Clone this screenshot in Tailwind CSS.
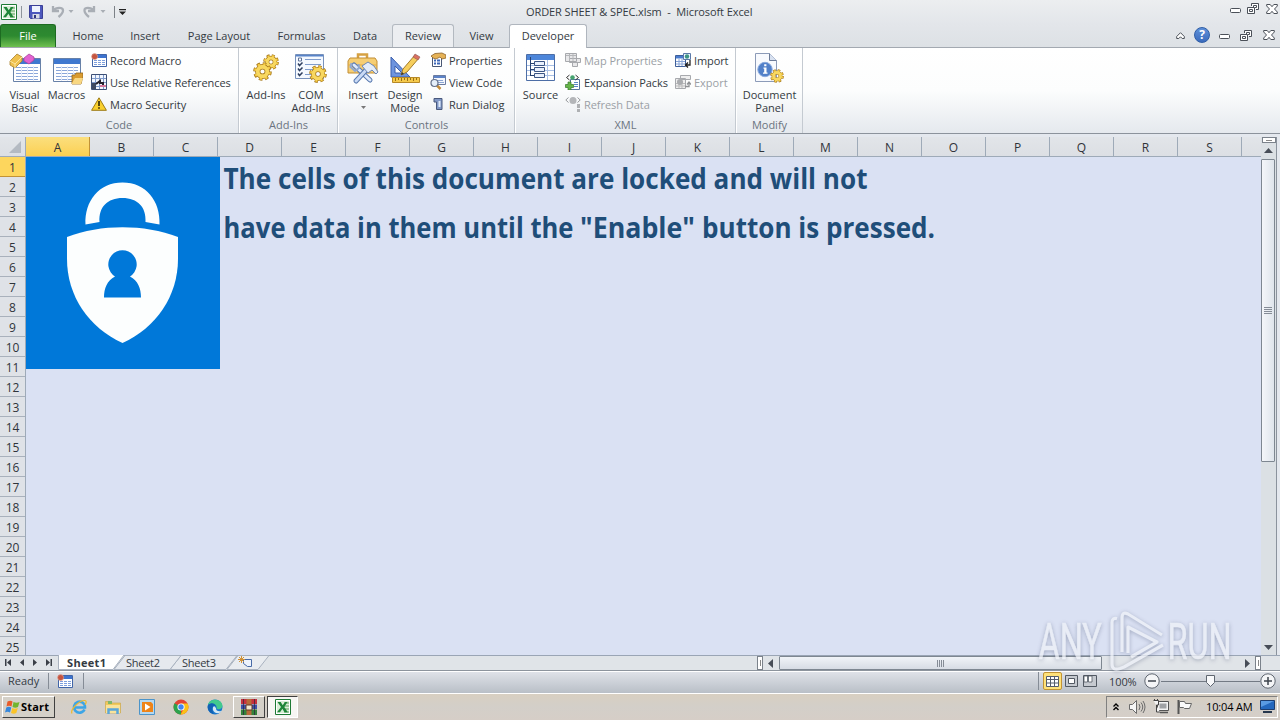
<!DOCTYPE html>
<html lang="en">
  <head>
    <meta charset="UTF-8" />
    <meta name="viewport" content="width=device-width, initial-scale=1.0" />
    <title>ORDER SHEET &amp; SPEC.xlsm - Microsoft Excel</title>
    <script src="https://cdn.jsdelivr.net/npm/@tailwindcss/browser@4"></script>
  </head>
  <body class="w-[1280px] h-[720px] overflow-hidden flex flex-col bg-[#e1e5e9] text-[#343a42] text-[11px] leading-[13px] font-['Open_Sans',sans-serif] whitespace-nowrap select-none">
    <!-- Shared icons -->
    <svg class="hidden">
      <symbol id="gear" viewBox="0 0 20 20">
        <circle cx="10" cy="10" r="7.8" fill="none" stroke="#a87a1c" stroke-width="4" stroke-dasharray="3.500 2.626" />
        <circle cx="10" cy="10" r="5" fill="none" stroke="#a87a1c" stroke-width="5.600" />
        <circle cx="10" cy="10" r="7.400" fill="none" stroke="#f5cb45" stroke-width="3" stroke-dasharray="2.300 3.511" stroke-dashoffset="-.6" />
        <circle cx="10" cy="10" r="5" fill="none" stroke="#f8d860" stroke-width="4" />
      </symbol>
      <symbol id="sheet" viewBox="0 0 28 24">
        <path d="M.5.5h27v23H.5z" fill="#fff" stroke="#6781a8" />
        <path d="M1 1h26v5H1z" fill="#3f78cf" />
        <path d="M3 9.500h22M3 12.500h22M3 15.500h22M3 18.500h22M3 21.500h22" stroke="#8aa7da" />
        <path d="M8.500 8v15M14.500 8v15M20.500 8v15" stroke="#e3ebf8" />
      </symbol>
      <symbol id="restore" viewBox="0 0 12 11">
        <path d="M4.500 3V.5h7v6H9M.5 4.500h7v6h-7zM2.500 6.500h3v2h-3z" fill="#fff" stroke="#4b5058" />
        <path d="M6.500 4V2.500h3v2H8" fill="none" stroke="#4b5058" />
      </symbol>
      <symbol id="close" viewBox="0 0 12 10">
        <path d="M.7.5h3.500L6 2.700 7.800.5h3.500v1.500L8.500 5l2.800 3v1.500H7.800L6 7.300 4.200 9.500H.7V8l2.800-3L.7 2z" fill="#fff" stroke="#4b5058" />
      </symbol>
      <symbol id="excel" viewBox="0 0 16 16">
        <path d="M.5.5h15v15H.5z" fill="#fff" stroke="#1e7a35" />
        <path d="M2 2h12v12H2z" fill="#d9edd6" />
        <path d="M9 4h5M9 7h5M9 10h5M9 13h5" stroke="#58a35a" />
        <path d="M2.500 3h3.200l2 3.200L10 3h2.500L9.300 8l3.500 5.300H9.500L7.400 9.800 5 13.300H2L6 8z" fill="#1e8538" />
      </symbol>
      <symbol id="record" viewBox="0 0 16 14">
        <path d="M1.500 1.500h14v12h-14z" fill="#fff" stroke="#4065a8" />
        <path d="M2 2h13v3H2z" fill="#3d73cf" />
        <path d="M3 7.500h11M3 9.500h11M3 11.500h11" stroke="#7d9fdd" stroke-dasharray="3 1" />
        <circle cx="3.600" cy="3.600" r="3" fill="#c5543f" stroke="#e7aa98" stroke-width=".6" />
      </symbol>
    </svg>

    <!-- Title bar -->
    <header class="h-6 shrink-0 flex items-center justify-between pb-px bg-linear-to-b from-[#eceef0] to-[#e3e6ea]">
      <div class="w-[400px] h-[22px] flex items-center pl-px">
        <svg class="w-4 h-4"><use href="#excel" /></svg>
        <span class="w-px h-3 ml-1 bg-[#8f959c]"></span>
        <svg class="w-[14px] h-[14px] ml-[7px]" viewBox="0 0 14 14">
          <path d="M.5.5h13v13h-12l-1-1z" fill="#4c57bd" stroke="#3a3f96" />
          <path d="M3 1h8v6H3z" fill="#edf2fd" />
          <path d="M3.500 9h7v4.500h-7z" fill="#d8dbe5" />
          <path d="M5 10h2v3H5z" fill="#30357d" />
        </svg>
        <svg class="w-[60px] h-[14px] ml-[7px]" viewBox="0 0 60 14" fill="none" stroke="#a9aeb5" stroke-width="2.300">
          <path d="M3 1v5h6M3.500 5.500C6 2 13 2 13 5.500c0 2.500-2 4.500-4.500 6.500" />
          <path d="M44 1v5h-6M43.500 5.500C41 2 34 2 34.500 5.500c0 2.500 2 4.500 4.500 6.500" />
          <path d="M18.500 5h5l-2.500 3zM50.500 5h5l-2.500 3z" fill="#a9aeb5" stroke="none" />
        </svg>
        <span class="w-px h-3 ml-1 bg-[#7c8187]"></span>
        <svg class="w-[7px] h-[6px] ml-1 mt-px" viewBox="0 0 7 6"><path d="M0 0h7v1.300H0zM0 2.500h7L3.500 6z" fill="#222" /></svg>
      </div>
      <h1 class="w-[228px] tracking-[-0.09px]">ORDER SHEET &amp; SPEC.xlsm&nbsp; -&nbsp; Microsoft Excel</h1>
      <div class="w-[400px] flex justify-end items-center pr-0.5 pb-1.5">
        <svg class="w-[11px] h-[5px] mt-1" viewBox="0 0 11 5"><rect x=".5" y=".5" width="10" height="4" rx="1" fill="#fff" stroke="#4b5058" /></svg>
        <svg class="w-3 h-[11px] ml-1.5"><use href="#restore" /></svg>
        <svg class="w-3 h-[10px] ml-[7px]"><use href="#close" /></svg>
      </div>
    </header>

    <!-- Ribbon tabs -->
    <nav class="h-6 shrink-0 flex items-stretch text-center leading-[23px] bg-linear-to-b from-[#e3e6ea] to-[#dde1e5] border-b border-[#a3a9b1]">
      <div class="w-14 h-[23px] rounded-t-[3px] border border-b-0 border-[#1d6b21] text-white leading-[22px] bg-linear-to-b from-[#2b8330] via-[#2d8a30] to-[#6fc150]">File</div>
      <div class="w-[3px]"></div>
      <div class="w-[58px]">Home</div>
      <div class="w-14">Insert</div>
      <div class="w-[92px]">Page Layout</div>
      <div class="w-[73px]">Formulas</div>
      <div class="w-[54px]">Data</div>
      <div class="w-[62px] rounded-t-[3px] border border-b-0 border-[#b3b9c0] bg-[#eceef1] leading-[21px]">Review</div>
      <div class="w-[55px]">View</div>
      <div class="w-[78px] h-6 rounded-t-[3px] border border-b-0 border-[#b0b6be] bg-white leading-[21px]">Developer</div>
      <div class="ml-auto flex items-center pr-[5px]">
        <svg class="w-[9px] h-[8px]" viewBox="0 0 9 8"><path d="M4.500.7l3.800 3.800v2H6.200L4.500 4.800 2.800 6.500H.7v-2z" fill="#fff" stroke="#4b5058" /></svg>
        <span class="w-4 h-4 ml-[9px] -mt-px rounded-full border border-[#2f5ea6] bg-linear-to-b from-[#5f91d9] to-[#3b6bbd] text-white text-[12px] font-bold leading-[14px]">?</span>
        <svg class="w-[11px] h-[5px] ml-[9px] mt-0.5" viewBox="0 0 11 5"><rect x=".5" y=".5" width="10" height="4" rx="1" fill="#fff" stroke="#4b5058" /></svg>
        <svg class="w-3 h-[11px] ml-[10px]"><use href="#restore" /></svg>
        <svg class="w-3 h-[10px] ml-[11px] -mt-0.5"><use href="#close" /></svg>
      </div>
    </nav>

    <!-- Ribbon -->
    <section class="h-[86px] shrink-0 flex bg-linear-to-b from-white via-[#fcfdfd] to-[#e5e9ee] border-b border-[#8c939c]">
      <!-- Code -->
      <div class="w-[239px] flex flex-col border-r border-[#c4cad1]">
        <div class="h-[70px] flex pl-[3px] pt-px">
          <div class="w-[43px] flex flex-col items-center text-center">
            <svg class="w-8 h-8 mt-1" viewBox="0 0 32 32">
              <svg x="4" y="5" width="28" height="24"><use href="#sheet" /></svg>
              <path d="M1 8l7-7 5 3v4l-7 7-5-3z" fill="#efc14e" stroke="#a8802c" stroke-width=".8" />
              <path d="M1 8l5 3 7-7M6 11v4" fill="none" stroke="#fbe5a1" />
              <path d="M15 5l5-4 5 3v3l-5 4-5-3z" fill="#e262d1" stroke="#a845a0" stroke-width=".8" />
            </svg>
            <span class="mt-[3px]">Visual<br />Basic</span>
          </div>
          <div class="w-[41px] flex flex-col items-center">
            <svg class="w-8 h-8 mt-1" viewBox="0 0 32 32">
              <svg x="2" y="5" width="28" height="24"><use href="#sheet" /></svg>
              <path d="M21 29v-7h3l1-2h7v3l-2 8h-9z" fill="#d99b30" stroke="#93651c" stroke-width=".8" />
              <path d="M21 30l3-5h8l-2 6h-9z" fill="#f8d781" />
            </svg>
            <span class="mt-[3px]">Macros</span>
          </div>
          <div class="ml-1 flex flex-col">
            <div class="h-[22px] flex items-center gap-[3px]">
              <svg class="w-4 h-[14px]"><use href="#record" /></svg>Record Macro
            </div>
            <div class="h-[22px] flex items-center gap-[3px] tracking-[-0.07px]">
              <svg class="w-4 h-4" viewBox="0 0 16 16">
                <path d="M.5.5h15v15H.5z" fill="#f2f7ff" stroke="#3d5076" />
                <path d="M4.500 1v14M8.500 1v14M12.500 1v14M1 4.500h14M1 8.500h14M1 12.500h14" stroke="#7f9bcc" />
                <path d="M1 9h4v6H1z" fill="#3e4961" />
                <path d="M5 10l4-3v2h3v4" fill="none" stroke="#26232d" stroke-width="2" />
                <path d="M9 11h6v2H9z" fill="#d77aa0" />
              </svg>Use Relative References
            </div>
            <div class="h-[22px] flex items-center gap-[3px]">
              <svg class="w-4 h-[14px]" viewBox="0 0 16 14">
                <path d="M8 .8L15.400 13.300H.6z" fill="#f9d02e" stroke="#9c7a14" stroke-linejoin="round" />
                <path d="M7.200 4h1.600v5H7.200zM7.200 10.200h1.600v1.600H7.200z" fill="#2b2405" />
              </svg>Macro Security
            </div>
          </div>
        </div>
        <span class="text-center text-[#6b747f]">Code</span>
      </div>
      <!-- Add-Ins -->
      <div class="w-[99px] flex flex-col border-l border-l-white border-r border-r-[#c4cad1]">
        <div class="h-[70px] flex pl-1 pt-px">
          <div class="w-[44px] flex flex-col items-center">
            <svg class="w-8 h-8 mt-1" viewBox="0 0 32 32">
              <use href="#gear" x="13" y="1" width="16" height="16" />
              <use href="#gear" x="3" y="9" width="19" height="19" />
            </svg>
            <span class="mt-[3px]">Add-Ins</span>
          </div>
          <div class="w-[46px] flex flex-col items-center text-center">
            <svg class="w-8 h-8 mt-1" viewBox="0 0 32 32">
              <path d="M.5 1.500h28v24H.5z" fill="#f5f9ff" stroke="#7791bb" />
              <path d="M1 2h27v1.500H1z" fill="#5783c8" />
              <path d="M10 6.500h16M10 11.500h16M10 16.500h14M10 21.500h6" stroke="#7f9ccc" />
              <path d="M3.500 5h3v3h-3z" fill="#fff" stroke="#5e7297" />
              <path d="M3 10.500l1.500 2 3-3M3 15.500l1.500 2 3-3M3 20.500l1.500 2 3-3" fill="none" stroke="#2d3e5f" stroke-width="1.500" />
              <use href="#gear" x="14" y="12" width="18" height="18" />
            </svg>
            <span class="mt-[3px]">COM<br />Add-Ins</span>
          </div>
        </div>
        <span class="text-center text-[#6b747f]">Add-Ins</span>
      </div>
      <!-- Controls -->
      <div class="w-[177px] flex flex-col border-l border-l-white border-r border-r-[#c4cad1]">
        <div class="h-[70px] flex pl-[3px] pt-px">
          <div class="w-[42px] flex flex-col items-center">
            <svg class="w-8 h-8 mt-1" viewBox="0 0 32 32">
              <path d="M11 5V1.500h9V5" fill="none" stroke="#d6a142" stroke-width="2.500" />
              <path d="M3 5h25l2 3v12H1V8z" fill="#f6ce73" stroke="#c18d35" />
              <path d="M1 12h29" stroke="#e0a945" />
              <path d="M7 12l16 15" stroke="#5778ae" stroke-width="5" stroke-linecap="round" />
              <path d="M7 12l16 15" stroke="#dfeafc" stroke-width="3" stroke-linecap="round" />
              <path d="M4.500 10l-1 4 4.500 4 4-3-.5-4" fill="none" stroke="#90a8d0" stroke-width="2" />
              <path d="M20 16L9 28" stroke="#5778ae" stroke-width="5" stroke-linecap="round" />
              <path d="M20 16L9 28" stroke="#c9daf5" stroke-width="3" stroke-linecap="round" />
              <path d="M15 13l6-4 6 4 4 6-2 2-4-4-4 3z" fill="#e4edfa" stroke="#6e87b4" />
            </svg>
            <span class="mt-[3px]">Insert</span>
            <svg class="w-[5px] h-[3px] mt-[5px]" viewBox="0 0 5 3"><path d="M0 0h5L2.500 3z" fill="#777" /></svg>
          </div>
          <div class="w-[42px] flex flex-col items-center text-center">
            <svg class="w-8 h-8 mt-1" viewBox="0 0 32 32">
              <path d="M2 4v20h19z" fill="#6d94de" stroke="#3b5fae" />
              <path d="M6 13v7h7z" fill="#fff" stroke="#3b5fae" />
              <path d="M3.500 24.500h27v5h-27z" fill="#f5c94b" stroke="#b68927" />
              <path d="M6.500 25v3M9.500 25v2M12.500 25v3M15.500 25v2M18.500 25v3M21.500 25v2M24.500 25v3M27.500 25v2" stroke="#987019" />
              <path d="M12 22l2-6L26 2l4 3-12 14z" fill="#f6ce5c" stroke="#a27a28" />
              <path d="M24 4l2-3 5 3-2 3z" fill="#d97062" stroke="#8d5e5a" stroke-width=".6" />
              <path d="M12 22l1-3 2 2z" fill="#333" />
            </svg>
            <span class="mt-[3px]">Design<br />Mode</span>
          </div>
          <div class="ml-1 flex flex-col">
            <div class="h-[22px] flex items-center gap-[3px]">
              <svg class="w-4 h-4" viewBox="0 0 16 16">
                <path d="M2.500 4.500h9v10h-9z" fill="#fff" stroke="#4a5875" />
                <path d="M4 8.500h2M4 11.500h2M7 8.500h3M7 11.500h3" stroke="#3c67b7" stroke-width="2" />
                <path d="M1 4l4-2.500 7-.5 4 2v3l-4 1-2-2-4 2-3-1z" fill="#e5b257" stroke="#8b622b" stroke-width=".8" />
              </svg>Properties
            </div>
            <div class="h-[22px] flex items-center gap-[3px]">
              <svg class="w-4 h-4" viewBox="0 0 16 16">
                <path d="M3.500 1.500h12v9h-12z" fill="#f4f7fd" stroke="#6a7ba0" />
                <path d="M4 2h11v2H4z" fill="#5b82c7" />
                <path d="M6 6.500h7M8 8.500h6" stroke="#8ba5d2" />
                <path d="M6.500 11l4 4" stroke="#c28b3a" stroke-width="2.500" />
                <circle cx="4.500" cy="9" r="3.500" fill="#e5effa" stroke="#65718b" stroke-width="1.200" />
              </svg>View Code
            </div>
            <div class="h-[22px] flex items-center gap-[3px]">
              <svg class="w-4 h-4" viewBox="0 0 16 16">
                <path d="M4 2.500h8v11H6.500V6H4z" fill="#8097c5" stroke="#48597d" />
                <path d="M8.500 5h2v6h-2z" fill="#dfeafa" />
              </svg>Run Dialog
            </div>
          </div>
        </div>
        <span class="text-center text-[#6b747f]">Controls</span>
      </div>
      <!-- XML -->
      <div class="w-[221px] flex flex-col border-l border-l-white border-r border-r-[#c4cad1]">
        <div class="h-[70px] flex pl-1 pt-px">
          <div class="w-[41px] flex flex-col items-center">
            <svg class="w-8 h-8 mt-1" viewBox="0 0 32 32">
              <path d="M1.500 1.500h28v26h-28z" fill="#fff" stroke="#4d6ea6" />
              <path d="M2 2h27v5H2z" fill="#4d86da" />
              <path d="M22.500 7v20M2 12.500h27M2 17.500h27M2 22.500h27" stroke="#a9c0e6" />
              <path d="M5.500 4v19M5.500 10.500h4M5.500 16.500h4M5.500 22.500h4" stroke="#27416f" />
              <path d="M9.500 8.500h10v4h-10zM9.500 14.500h10v4h-10zM9.500 20.500h10v4h-10z" fill="#e9f0fc" stroke="#3c5685" />
            </svg>
            <span class="mt-[3px]">Source</span>
          </div>
          <div class="w-[110px] ml-1 flex flex-col tracking-[-0.05px]">
            <div class="h-[22px] flex items-center gap-[3px] text-[#9b9fa5]">
              <svg class="w-4 h-4" viewBox="0 0 16 16">
                <path d="M.5 1.500h11v8H.5zM4.500 6.500h11v4h-11zM7.500 10.500h5v4h-5z" fill="#e8e8ea" stroke="#a7a9ad" />
                <path d="M1 3.500h10M4.500 2v7M8 2v7" stroke="#b5b7ba" />
              </svg>Map Properties
            </div>
            <div class="h-[22px] flex items-center gap-[3px]">
              <svg class="w-4 h-4" viewBox="0 0 16 16">
                <path d="M5.500 5.500h9v10h-9z" fill="#fff" stroke="#56719e" />
                <path d="M9 8.500h4M9 10.500h4M9 12.500h4" stroke="#5c83c5" />
                <path d="M4.500 1L1.500 3.500l3 2.500M10.500 1l3 2.500-3 2.500" fill="none" stroke="#333" />
                <circle cx="7.500" cy="3.500" r="2.300" fill="#45a36f" />
                <path d="M3 8h3v2.500h2.500v3H6V16H3v-2.500H.5v-3H3z" fill="#66b547" stroke="#34762c" stroke-width=".7" />
              </svg>Expansion Packs
            </div>
            <div class="h-[22px] flex items-center gap-[3px] text-[#9b9fa5]">
              <svg class="w-4 h-4" viewBox="0 0 16 16">
                <path d="M3.500 1.500L.8 4l2.700 2.500M12.500 1.500L15.200 4l-2.700 2.500" fill="none" stroke="#96989c" />
                <circle cx="8" cy="4.500" r="3.500" fill="#b4b6b9" />
                <path d="M12 8h3v4h-3zM12 13h3v3h-3z" fill="#aeb0b3" />
              </svg>Refresh Data
            </div>
          </div>
          <div class="flex flex-col">
            <div class="h-[22px] flex items-center gap-[3px] tracking-[-0.1px]">
              <svg class="w-4 h-4" viewBox="0 0 16 16">
                <path d="M.5 3.500h10v11H.5z" fill="#fff" stroke="#3e5f9a" />
                <path d="M1 4h9v2.500H1z" fill="#4a7ccf" />
                <path d="M1 9.500h9M1 12h9M4 7v7M7 7v7" stroke="#86a4d8" />
                <path d="M8.500 1.500h7v6h-7z" fill="#edf5ff" stroke="#5b79a8" />
                <circle cx="12" cy="4.500" r="2.200" fill="#3e9684" />
                <path d="M15 8v5h-4M13 10.500L10.500 13l2.500 2.500" fill="none" stroke="#222" stroke-width="1.300" />
              </svg>Import
            </div>
            <div class="h-[22px] flex items-center gap-[3px] text-[#9b9fa5]">
              <svg class="w-4 h-4" viewBox="0 0 16 16">
                <path d="M.5 4.500h10v10H.5zM5.500 1.500h10v4h-10z" fill="#eee" stroke="#a7a9ad" />
                <path d="M1 12h9M4 7v7M7 7v7M1 9.500h9" stroke="#bbb" />
                <circle cx="5" cy="8" r="3" fill="#aaacaf" />
                <path d="M10 12.500h4V9M12 10.500L14 8l2 2.500" fill="none" stroke="#8f9194" stroke-width="1.300" />
              </svg>Export
            </div>
          </div>
        </div>
        <span class="text-center text-[#6b747f]">XML</span>
      </div>
      <!-- Modify -->
      <div class="w-[67px] flex flex-col border-l border-l-white border-r border-r-[#c4cad1]">
        <div class="h-[70px] flex justify-center pt-px">
          <div class="flex flex-col items-center text-center">
            <svg class="w-8 h-8 mt-1" viewBox="0 0 32 32">
              <path d="M1.500.5h14l7 7v21h-21z" fill="#f8fafe" stroke="#8c9bb8" />
              <path d="M15.500.5v7h7" fill="#d8e1f0" stroke="#6c7b98" />
              <circle cx="11" cy="16.500" r="7.200" fill="#5180c9" stroke="#8aaade" />
              <path d="M9.500 14.500h3v5h1v1.300H9v-1.300h1.200v-3.700h-.7zM10.200 11.300h2.200v2h-2.200z" fill="#fff" />
              <use href="#gear" x="16" y="16" width="14" height="14" />
            </svg>
            <span class="mt-[3px]">Document<br />Panel</span>
          </div>
        </div>
        <span class="text-center text-[#6b747f]">Modify</span>
      </div>
    </section>

    <!-- Worksheet -->
    <main class="h-[521px] shrink-0 pt-[3px] flex bg-[#e4e8ee]">
      <div class="w-[1261px] flex flex-col">
        <div id="columns" class="h-5 shrink-0 flex text-center text-[12px] leading-[21px] text-[#30343a] border-b border-[#9eaab8] bg-linear-to-b from-[#e2e5e9] to-[#dcdfe4]">
          <div class="w-[26px] flex justify-end items-end pr-1 pb-[3px] border-r border-[#9eaab8]">
            <svg class="w-3 h-3" viewBox="0 0 12 12"><path d="M12 0v12H0z" fill="#b4bac2" /></svg>
          </div>
        </div>
        <div class="h-[498px] flex overflow-hidden">
          <div id="rows" class="w-[26px] shrink-0 text-center text-[12px] leading-[21px] text-[#30343a] bg-[#dfe2e7] border-r border-[#9eaab8]"></div>
          <div class="grow flex items-start bg-[#dae1f3]">
            <svg class="w-[194px] h-[212px]" viewBox="0 0 194 212">
              <path d="M0 0h194v212H0z" fill="#0078d9" />
              <path d="M59.500 67.500C58.500 44 73 25.500 96.500 25.500s38 18.500 37 42l-14-2.500c1-15-8-24-23-24s-24 9-23 24z" fill="#fcfefe" />
              <path d="M41 80c34-13 77-13 111 0v22c0 37-22 69-55.500 84C63 171 41 139 41 102z" fill="#fcfefe" />
              <path d="M78 140.500c0-9 3-17 11-21a14.200 14.200 0 1 1 15 0c8 4 11 12 11 21z" fill="#0078d9" />
            </svg>
            <svg class="w-[1000px] h-[100px] overflow-visible" viewBox="0 0 1000 100" fill="#1f4e79" font-family="Open Sans" font-weight="700" font-size="29">
              <text x="3.500" y="32" textLength="644" lengthAdjust="spacingAndGlyphs">The cells of this document are locked and will not</text>
              <text x="3.500" y="81" textLength="350" lengthAdjust="spacingAndGlyphs">have data in them until the</text>
              <text x="360" y="81" textLength="115" lengthAdjust="spacingAndGlyphs">"Enable"</text>
              <text x="482" y="81" textLength="233" lengthAdjust="spacingAndGlyphs">button is pressed.</text>
            </svg>
          </div>
        </div>
      </div>
      <!-- Vertical scrollbar -->
      <div class="w-4 flex flex-col items-start bg-[#dbe0e4] border-r border-[#8b939d]">
        <div class="w-[14px] h-[6px] ml-px border border-[#7b828b] bg-white flex items-center justify-center"><span class="w-1.5 h-px bg-[#888]"></span></div>
        <svg class="w-[9px] h-[5px] ml-[3px] mt-[5px]" viewBox="0 0 9 5"><path d="M4.500 0L9 5H0z" fill="#474d57" /></svg>
        <div class="w-[14px] h-[303px] mt-[6px] border border-[#7e8791] rounded-[1px] bg-linear-to-r from-[#f4f6f9] to-[#dfe5ec] flex items-center justify-center">
          <div class="w-2 h-[7px] border-y border-[#858c96] flex flex-col justify-evenly"><span class="h-px bg-[#858c96]"></span><span class="h-px bg-[#858c96]"></span></div>
        </div>
        <svg class="w-[9px] h-[5px] ml-[3px] mt-auto mb-[5px]" viewBox="0 0 9 5"><path d="M0 0h9L4.500 5z" fill="#474d57" /></svg>
      </div>
    </main>

    <!-- Sheet tabs and horizontal scrollbar -->
    <div class="h-4 shrink-0 flex bg-[#e0e4e8] border-b border-[#8d949d]">
      <svg class="w-[272px] h-[15px]" viewBox="0 0 272 15" font-family="Open Sans" font-size="11" fill="#343a42">
        <path d="M0 .5h272" stroke="#9aa5b5" />
        <path d="M5 4h1.500v7H5zM11 4v7L7 7.500zM24 4v7l-4-3.500zM33 4v7l4-3.500zM46 4v7l4-3.500zM50.500 4H52v7h-1.500z" fill="#3b4048" />
        <path d="M227 14.500L238 .5h31l-11 14z" fill="#e9ecf0" stroke="#a9b2bf" />
        <path d="M170 14.500L181 .5h56l-11 14z" fill="#e6e9ee" stroke="#a9b2bf" />
        <path d="M114 14.500L125 .5h56l-11 14z" fill="#e6e9ee" stroke="#a9b2bf" />
        <path d="M58.500 0v14.500H113L124 0z" fill="#fff" />
        <path d="M58.500 0v14.500H113L124 0" fill="none" stroke="#a9b2bf" />
        <text x="67" y="11.500" font-weight="700" textLength="39">Sheet1</text>
        <text x="126" y="11.500" textLength="34">Sheet2</text>
        <text x="182" y="11.500" textLength="34">Sheet3</text>
        <path d="M243.500 4.500h8v7h-4l-4-3z" fill="#edf3fd" stroke="#486ba7" />
        <path d="M241.500 1v7M238 4.500h7M239 2l5 5M244 2l-5 5" stroke="#d19134" />
      </svg>
      <div class="grow border-t border-[#9aa5b5] flex items-center">
        <span class="w-[6px] h-[14px] ml-[485px] border border-[#7b828b] bg-white flex items-center justify-center"><span class="w-px h-1.5 bg-[#888]"></span></span>
        <svg class="w-[5px] h-[9px] ml-[5px]" viewBox="0 0 5 9"><path d="M5 0v9L0 4.500z" fill="#474d57" /></svg>
        <div class="w-[323px] h-[14px] ml-[6px] border border-[#7e8791] rounded-[1px] bg-linear-to-b from-[#f1f4f8] to-[#d7dce4] flex items-center justify-center">
          <div class="w-[7px] h-[7px] border-x border-[#858c96] flex justify-evenly"><span class="w-px bg-[#858c96]"></span><span class="w-px bg-[#858c96]"></span></div>
        </div>
        <svg class="w-[5px] h-[9px] ml-[143px]" viewBox="0 0 5 9"><path d="M0 0v9l5-4.500z" fill="#474d57" /></svg>
        <span class="w-[6px] h-[14px] ml-[5px] border border-[#7b828b] bg-white flex items-center justify-center"><span class="w-px h-1.5 bg-[#888]"></span></span>
      </div>
    </div>

    <!-- Status bar -->
    <footer class="h-[22px] shrink-0 flex items-center pb-[3px] border-t border-white bg-linear-to-b from-[#dfe2e8] to-[#b9bfc7]">
      <span class="w-[49px] pl-2 h-4 leading-4 border-r border-[#858c96]">Ready</span>
      <span class="w-[35px] pl-2 h-4 flex items-center border-r border-[#858c96]"><svg class="w-4 h-[14px]"><use href="#record" /></svg></span>
      <div class="ml-auto flex items-center pr-1">
        <span class="w-px h-[18px] bg-[#858c96]"></span>
        <span class="w-[19px] h-[18px] ml-1 rounded-[2px] border border-[#c39434] bg-[#ffe27a] flex items-center justify-center">
          <svg class="w-[13px] h-[11px]" viewBox="0 0 13 11"><path d="M.5.5h12v10H.5zM.5 3.500h12M.5 7h12M4.500.5v10M8.500.5v10" fill="#fff" stroke="#555d6a" /></svg>
        </span>
        <svg class="w-[13px] h-3 ml-[3px]" viewBox="0 0 13 12"><path d="M.5.5h12v11H.5z" fill="#c6cad0" stroke="#525963" /><path d="M3.500 3.500h6v5h-6z" fill="#fff" stroke="#525963" /></svg>
        <svg class="w-[14px] h-3 ml-[5px]" viewBox="0 0 14 12"><path d="M.5.5h13v11H.5z" fill="#c6cad0" stroke="#525963" /><path d="M1 1h3.500v6H1zM5.500 1h3.500v6H5.500z" fill="#fff" stroke="#525963" stroke-width=".8" /></svg>
        <span class="w-[27px] ml-[12px] tracking-[-0.1px]">100%</span>
        <svg class="w-[132px] h-[18px] ml-[8px]" viewBox="0 0 132 18">
          <path d="M17 9.500h99" stroke="#737a84" />
          <circle cx="8" cy="9" r="7.200" fill="#f4f5f7" stroke="#5f6670" />
          <circle cx="124" cy="9" r="7.200" fill="#f4f5f7" stroke="#5f6670" />
          <path d="M4 9h8M120 9h8M124 5v8" stroke="#3e444d" stroke-width="1.500" />
          <path d="M62.500 3.500h8v7l-4 4-4-4z" fill="#f8f9fb" stroke="#5f6670" />
        </svg>
      </div>
    </footer>

    <!-- Taskbar -->
    <div class="grow flex items-center border-t border-white bg-linear-to-b from-[#d8cfc1] via-[#d3cfc9] to-[#d6cec7] text-black">
      <div class="w-[53px] h-[22px] ml-[2px] pb-px flex items-center pl-[2px] border border-t-white border-l-white border-r-[#404040] border-b-[#404040] bg-[#d4d0c8] font-bold tracking-[0.2px]">
        <svg class="w-[15px] h-[14px] mr-px" viewBox="0 0 15 14">
          <path d="M2.500 1.500q3-1.500 5 0L6.500 6.500q-2.500-1.500-5 0z" fill="#e85b29" />
          <path d="M8.500 2q3 1.500 6 0l-1.500 5q-2.500 1.500-5.500 0z" fill="#72b52e" />
          <path d="M1.300 7.500q2.500-1.500 5 0l-1.300 5q-2.500-1.500-5 0z" fill="#3587dc" />
          <path d="M7.300 8q2.500 1.500 5.500 0l-1.500 5q-2.500 1.500-5.300 0z" fill="#fbc428" />
        </svg>Start
      </div>
      <svg class="w-4 h-4 ml-4" viewBox="0 0 16 16">
        <path d="M13.500 10.500A5.500 5.500 0 1 1 14 8.500H4" fill="none" stroke="#3da5e6" stroke-width="2.600" />
        <path d="M1 14.500C-1 11 8 1 14 1.500c2 .5 1 3 0 4" fill="none" stroke="#edb92f" stroke-width="1.200" />
      </svg>
      <svg class="w-4 h-[14px] ml-[18px]" viewBox="0 0 16 14">
        <path d="M.5 1.500h5l1 1.500h9v10H.5z" fill="#f0c85c" stroke="#c9a545" stroke-width=".6" />
        <path d="M3 1h4v3H3z" fill="#7fb768" /><path d="M1 5h14v8H1z" fill="#f9e39a" />
        <path d="M3.500 14V9.500h9V14" fill="none" stroke="#5ba6d9" stroke-width="2.500" />
      </svg>
      <svg class="w-4 h-4 ml-[18px]" viewBox="0 0 16 16">
        <path d="M.5.5h15v15H.5z" fill="#b6d8f0" stroke="#4c94c9" />
        <path d="M3 3h9l2 2v8H3z" fill="#ee8419" /><path d="M6 4.500v7L11.500 8z" fill="#fff" />
      </svg>
      <svg class="w-4 h-4 ml-[18px]" viewBox="0 0 16 16">
        <circle cx="8" cy="8" r="7.500" fill="#e24335" />
        <path d="M1.500 4.300L8 8v7.500A7.500 7.500 0 0 1 1.500 4.300z" fill="#2da24d" />
        <path d="M8 4.500h6.600A7.500 7.500 0 0 1 7.500 15.500L11 9.500z" fill="#fbc116" />
        <circle cx="8" cy="8" r="3.600" fill="#fff" /><circle cx="8" cy="8" r="2.700" fill="#4184f0" />
      </svg>
      <svg class="w-4 h-4 ml-[18px]" viewBox="0 0 16 16">
        <circle cx="8" cy="8" r="7.500" fill="#1b78cd" />
        <path d="M1 6C2-1 15-1 15.500 7c0 3-4 4-6 2.500C11 6 5 3 1 6z" fill="#42c98e" />
        <path d="M7 7c-3 3 0 8 5 7 1 0 2-1 2.500-2-3 1-6-.5-5.500-3z" fill="#d6e8f3" />
        <path d="M1 6c3-3 7-2 8 1-4-1-5 4-2 8C2 14 0 10 1 6z" fill="#1261b3" />
      </svg>
      <div class="w-8 h-[22px] ml-[10px] flex items-center justify-center border border-t-white border-l-white border-r-[#404040] border-b-[#404040] bg-[#d4d0c8]">
        <svg class="w-4 h-4" viewBox="0 0 16 16">
          <path d="M0 0h16v5H0z" fill="#c5303f" /><path d="M0 5.500h16v4.500H0z" fill="#3d4fa9" /><path d="M0 10.500h16V16H0z" fill="#34823c" />
          <path d="M5.500 0h5v16h-5z" fill="#b76a39" /><path d="M5 6h6v5H5z" fill="#f3e7cd" stroke="#5f3928" /><path d="M2.500 0v16M13.500 0v16" stroke="#29243e" stroke-width=".7" />
        </svg>
      </div>
      <div class="w-[31px] h-[22px] ml-0.5 flex items-center justify-center border border-t-[#404040] border-l-[#404040] border-r-white border-b-white bg-[#f7f6f3]">
        <svg class="w-4 h-4"><use href="#excel" /></svg>
      </div>
      <!-- Notification area -->
      <div class="ml-auto mr-[2px] w-[172px] h-[22px] pb-px flex items-center border border-t-[#808080] border-l-[#808080] border-r-white border-b-white">
        <svg class="w-[6px] h-[8px] ml-[6px]" viewBox="0 0 6 8"><path d="M.5 3.500L3 1l2.500 2.500M.5 7L3 4.500 5.500 7" fill="none" stroke="#000" stroke-width="1.400" /></svg>
        <svg class="w-[17px] h-[14px] ml-[10px]" viewBox="0 0 17 14" fill="none" stroke="#6b6b6b">
          <path d="M.5 4.500h3l4-4v13l-4-4h-3z" fill="#f6f6f6" /><path d="M10 4q2 3 0 6M12 2.500q3.500 4.500 0 9M14 1q4 6 0 12" />
        </svg>
        <svg class="w-4 h-[15px] ml-[7px]" viewBox="0 0 16 15">
          <path d="M4.500 2.500h11v9h-11z" fill="#f4f4f4" stroke="#555" /><path d="M6.500 4.500h7v5h-7z" fill="#a0a2a5" /><path d="M7 13.500h8" stroke="#555" stroke-width="1.500" />
          <path d="M.5 1.500h5v4.500H3.500v7H7M1.500 0v2M4.500 0v2" fill="#f4f4f4" stroke="#444" />
        </svg>
        <svg class="w-[15px] h-[14px] ml-2" viewBox="0 0 15 14"><path d="M1.500 0v14" stroke="#555" stroke-width="2" /><path d="M2.500 1.500h5l1 2h6l-2 5H7.500l-1-1h-4z" fill="#fafafa" stroke="#666" /></svg>
        <span class="w-[47px] ml-[14px] tracking-[-0.15px]">10:04 AM</span>
        <svg class="w-[15px] h-[13px] ml-[7px]" viewBox="0 0 15 13"><path d="M.5.5h14v9H.5z" fill="#2468be" stroke="#1d3e70" /><path d="M1 1h13L1 7z" fill="#5a9be3" /><path d="M3 11h9v2H3z" fill="#27374d" /></svg>
      </div>
    </div>

    <!-- Recording watermark -->
    <svg class="absolute left-[1030px] top-[604px] w-[250px] h-[72px] overflow-visible drop-shadow-[0_1px_2px_rgba(90,100,130,0.6)] opacity-75" viewBox="0 0 250 72" fill="#eef1f8" stroke="#eef1f8" stroke-width=".6" font-family="Roboto" font-weight="400">
      <g transform="scale(.65 1)">
        <text x="13" y="55" font-size="50">ANY</text>
        <text x="211.500" y="55" font-size="50">RUN</text>
      </g>
      <path d="M87 14.500q-5-1-5 4V60q0 7 8 4.500l4-1.500 39-22M92 48V14q0-7 6-4l34 21M98 49V23l29 15-26 15" fill="none" stroke-width="3.200" stroke-linejoin="round" />
    </svg>

    <script>
      const columns = document.getElementById("columns");
      "ABCDEFGHIJKLMNOPQRS".split("").forEach((name, i) => {
        const cell = document.createElement("div");
        cell.className = i === 0
          ? "w-16 border-r border-[#c29236] bg-linear-to-b from-[#fbdf7d] to-[#fcd051]"
          : "w-16 border-r border-[#9eaab8]";
        cell.textContent = name;
        columns.appendChild(cell);
      });

      const rows = document.getElementById("rows");
      for (let n = 1; n <= 25; n++) {
        const cell = document.createElement("div");
        cell.className = n === 1
          ? "h-5 border-b border-[#c29236] bg-[#fdd65d]"
          : "h-5 border-b border-[#a9b1bc]";
        cell.textContent = n;
        rows.appendChild(cell);
      }
    </script>
  </body>
</html>
